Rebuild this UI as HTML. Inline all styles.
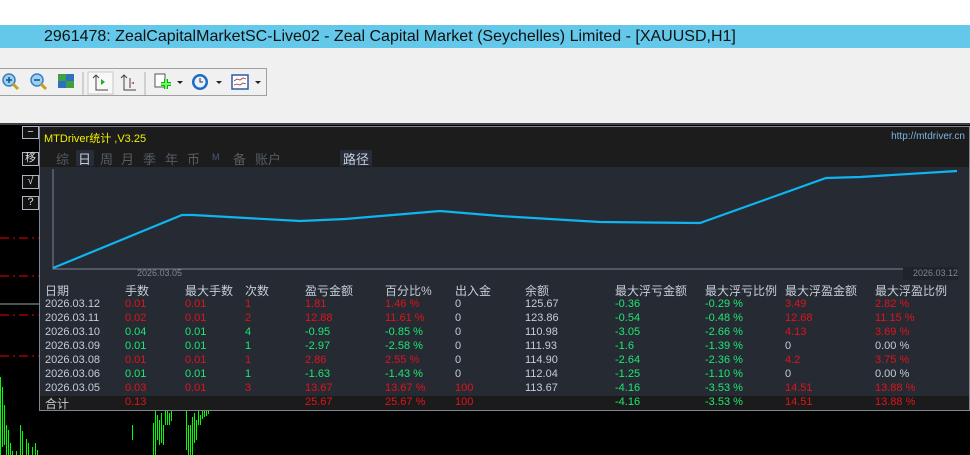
<!DOCTYPE html>
<html><head><meta charset="utf-8"><style>
*{margin:0;padding:0;box-sizing:border-box}
body{width:970px;height:455px;overflow:hidden;background:#000;position:relative;font-family:"Liberation Sans","Noto Sans CJK SC",sans-serif}
.abs{position:absolute}
#top{left:0;top:0;width:970px;height:25px;background:#fff}
#title{left:0;top:25px;width:970px;height:23px;background:#63c8e9;color:#111;font-size:16px;line-height:23px;padding-left:44px;letter-spacing:0;white-space:nowrap}
#gray{left:0;top:48px;width:970px;height:76px;background:#f0f0f0}
#tb{left:-2px;top:68px;width:269px;height:28px;border:1px solid #a0a0a0;border-left:none;background:#f0f0f0}
#blk{left:0;top:123px;width:970px;height:2px;background:#404040}
.sb{width:17px;height:13px;border:1px solid #aab4c4;color:#ddd;font-size:11px;line-height:11px;text-align:center;background:#111}
#panel{left:39px;top:126px;width:931px;height:285px;border:1px solid #7e8696;background:#252a33}
.t{position:absolute;font-size:11px;white-space:nowrap;color:#c5cdd8}
.tab{position:absolute;font-size:13px;top:22px;color:#555c66}
.r{color:#e0141c}.g{color:#1ee872}.w{color:#c5cdd8}
</style></head><body>
<div id="top" class="abs"></div>
<div id="title" class="abs">2961478: ZealCapitalMarketSC-Live02 - Zeal Capital Market (Seychelles) Limited - [XAUUSD,H1]</div>
<div id="gray" class="abs"></div>
<div id="tb" class="abs"></div>
<svg class="abs" style="left:0;top:68px" width="270" height="28">
 <circle cx="9" cy="12" r="6" fill="#9cd0f0" stroke="#3a7ec0" stroke-width="1.5"/><path d="M6 12h6M9 9v6" stroke="#1a4f8a" stroke-width="1.5"/><path d="M13 16l5 5" stroke="#c8a020" stroke-width="3"/>
 <circle cx="37" cy="12" r="6" fill="#9cd0f0" stroke="#3a7ec0" stroke-width="1.5"/><path d="M34 12h6" stroke="#1a4f8a" stroke-width="1.5"/><path d="M41 16l5 5" stroke="#c8a020" stroke-width="3"/>
 <rect x="58" y="6" width="8" height="7" fill="#3fa040"/><rect x="66" y="6" width="8" height="7" fill="#3070c0"/><rect x="58" y="13" width="8" height="7" fill="#3070c0"/><rect x="66" y="13" width="8" height="7" fill="#3fa040"/>
 <path d="M83 4v23" stroke="#b0b0b0"/>
 <rect x="88" y="4" width="25" height="22" fill="#f8f8f8" stroke="#c8c8c8"/>
 <path d="M96 7v15h12M93 10l3-3 3 3" stroke="#444" fill="none"/><path d="M101 11l4 3-4 3z" fill="#2a2"/>
 <path d="M124 7v15h12M121 10l3-3 3 3M130 10v10" stroke="#444" fill="none"/><path d="M134 14l-3 1 3 1z" fill="#c22"/>
 <path d="M145 4v23" stroke="#b0b0b0"/>
 <rect x="155" y="6" width="10" height="13" fill="#fff" stroke="#555"/><path d="M161 16h10M166 11v10" stroke="#1a1" stroke-width="4"/><path d="M161 16h10M166 11v10" stroke="#6f6" stroke-width="2"/>
 <path d="M177 13h6l-3 3z" fill="#222"/>
 <circle cx="200" cy="14" r="8" fill="#1f68c8"/><circle cx="200" cy="14" r="5.5" fill="#e8f0fa"/><path d="M200 10v4h3" stroke="#333" fill="none"/>
 <path d="M216 13h6l-3 3z" fill="#222"/>
 <rect x="232" y="7" width="16" height="14" fill="#fff" stroke="#2a5ca8" stroke-width="1.5"/><path d="M234 13l3-2 3 1 3-2 3 1M234 17l3-1 3 1 3-2 3 1" stroke="#a33" fill="none" stroke-width=".8"/>
 <path d="M255 13h6l-3 3z" fill="#222"/>
</svg>
<div id="blk" class="abs"></div>
<svg class="abs" style="left:0;top:125px" width="970" height="330">
 <path d="M0 113H39M0 151H39M0 190H39M0 231H39" stroke="#e00" stroke-dasharray="9,4,2,4"/>
 <path d="M0 179H39" stroke="#9aa"/>
 <g stroke="#00ff00" stroke-width="1">
 <path d="M0.5 252v78M2.5 262v60M4.5 280v40M6.5 300v30M8.5 305v25M10.5 318v12M12.5 326v4M14.5 330v0M16.5 326v4M20.5 300v30M22.5 306v24M26.5 314v16M28.5 318v12M32.5 322v8M35.5 318v12M37.5 325v5"/>
 <path d="M132.5 300v15M153.5 298v32M155.5 285v45M157.5 290v25M159.5 295v25M161.5 288v30M163.5 300v20M165.5 286v14M167.5 286v14M169.5 288v12M171.5 286v10"/>
 <path d="M186.5 285v40M188.5 300v40M190.5 300v30M192.5 292v40M194.5 288v30M196.5 295v20M198.5 286v14M200.5 290v10M202.5 286v8M204.5 286v6M206.5 286v5M208.5 286v3"/>
 </g>
</svg>
<div class="abs sb" style="left:22px;top:126px">−</div>
<div class="abs sb" style="left:22px;top:152px;height:14px">移</div>
<div class="abs sb" style="left:22px;top:175px;height:14px">√</div>
<div class="abs sb" style="left:22px;top:196px;height:14px">?</div>
<div id="panel" class="abs">
 <div class="abs" style="left:0;top:0;width:929px;height:40px;background:#1c1c1c"></div>
 <div class="t" style="left:4px;top:3px;color:#f0f000">MTDriver统计 ,V3.25</div>
 <div class="t" style="right:4px;top:4px;color:#7fb4e6;font-size:10px">http://mtdriver.cn</div>
 <div class="abs" style="left:36px;top:23px;width:18px;height:16px;background:#262d38"></div>
 <div class="abs" style="left:300px;top:23px;width:32px;height:16px;background:#262d38"></div>
 <div class="tab" style="left:16px">综</div>
 <div class="tab" style="left:38px;color:#c5cdd8">日</div>
 <div class="tab" style="left:60px">周</div>
 <div class="tab" style="left:81px">月</div>
 <div class="tab" style="left:103px">季</div>
 <div class="tab" style="left:125px">年</div>
 <div class="tab" style="left:147px">币</div>
 <div class="tab" style="left:172px;font-size:9px;top:25px;color:#4a5a80">M</div>
 <div class="tab" style="left:193px">备</div>
 <div class="tab" style="left:215px">账户</div>
 <div class="tab" style="left:303px;color:#c5cdd8">路径</div>
 <svg class="abs" style="left:0;top:40px" width="929" height="115">
  <path d="M13 2v100H917" stroke="#7b8390" fill="none"/>
  <polyline fill="none" stroke="#0fb4f0" stroke-width="2.2" points="13,101 142,48 153,48 260,54 305,52 400,44 460,49 560,55 660,56 786,11 820,10 917,4"/>
 </svg>
 <div class="t" style="left:97px;top:141px;font-size:9px;color:#7f8794">2026.03.05</div>
 <div class="abs" style="left:863px;top:140px;width:55px;height:13px;background:#1f232a"></div>
 <div class="t" style="left:873px;top:141px;font-size:9px;color:#7f8794">2026.03.12</div>
 <div class="abs" style="left:0;top:269px;width:929px;height:14px;background:#1c1b1b"></div>
 <div id="tbl"></div>
</div>
<script>
const cols=[5,85,145,205,265,345,415,485,575,665,745,835];
const rows=[
["w日期","w手数","w最大手数","w次数","w盈亏金额","w百分比%","w出入金","w余额","w最大浮亏金额","w最大浮亏比例","w最大浮盈金额","w最大浮盈比例"],
["w2026.03.12","r0.01","r0.01","r1","r1.81","r1.46 %","w0","w125.67","g-0.36","g-0.29 %","r3.49","r2.82 %"],
["w2026.03.11","r0.02","r0.01","r2","r12.88","r11.61 %","w0","w123.86","g-0.54","g-0.48 %","r12.68","r11.15 %"],
["w2026.03.10","g0.04","g0.01","g4","g-0.95","g-0.85 %","w0","w110.98","g-3.05","g-2.66 %","r4.13","r3.69 %"],
["w2026.03.09","g0.01","g0.01","g1","g-2.97","g-2.58 %","w0","w111.93","g-1.6","g-1.39 %","w0","w0.00 %"],
["w2026.03.08","r0.01","r0.01","r1","r2.86","r2.55 %","w0","w114.90","g-2.64","g-2.36 %","r4.2","r3.75 %"],
["w2026.03.06","g0.01","g0.01","g1","g-1.63","g-1.43 %","w0","w112.04","g-1.25","g-1.10 %","w0","w0.00 %"],
["w2026.03.05","r0.03","r0.01","r3","r13.67","r13.67 %","r100","w113.67","g-4.16","g-3.53 %","r14.51","r13.88 %"],
["w合计","r0.13","w","w","r25.67","r25.67 %","r100","w","g-4.16","g-3.53 %","r14.51","r13.88 %"]];
const tops=[155,171,185,199,213,227,241,255,269];
let h="";
rows.forEach((r,i)=>r.forEach((c,j)=>{const cls={w:"w",r:"r",g:"g"}[c[0]];const big=(i==0)||(i==8&&j==0);const tp=tops[i]+(i==8&&j==0?-1:0);h+=`<div class="t ${cls}" style="left:${cols[j]}px;top:${tp}px;font-size:${big?"12px":"11px"}">${c.slice(1)}</div>`}));
document.getElementById("tbl").innerHTML=h;
</script>
</body></html>
